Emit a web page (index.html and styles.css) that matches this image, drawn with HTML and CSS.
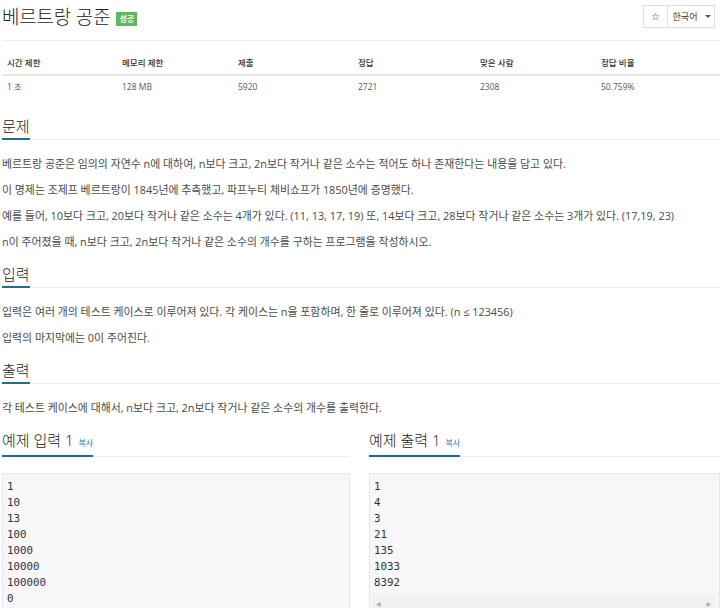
FILE: index.html
```html
<!DOCTYPE html>
<html lang="ko">
<head>
<meta charset="utf-8">
<title>베르트랑 공준</title>
<link rel="stylesheet" href="styles.css">
</head>
<body>
<div class="page">
  <div class="title-row">
    <h1 class="title">베르트랑 공준 <span class="badge">성공</span></h1>
    <div class="btn-group">
      <span class="btn star">☆</span>
      <span class="btn lang">한국어 <span class="caret"></span></span>
    </div>
  </div>

  <table class="info">
    <thead>
      <tr>
        <th class="c1">시간 제한</th>
        <th class="c2">메모리 제한</th>
        <th class="c3">제출</th>
        <th class="c4">정답</th>
        <th class="c5">맞은 사람</th>
        <th>정답 비율</th>
      </tr>
    </thead>
    <tbody>
      <tr>
        <td>1 초</td>
        <td>128 MB</td>
        <td>5920</td>
        <td>2721</td>
        <td>2308</td>
        <td>50.759%</td>
      </tr>
    </tbody>
  </table>

  <section class="sec">
    <h2 class="sec-head"><span>문제</span></h2>
    <p>베르트랑 공준은 임의의 자연수 n에 대하여, n보다 크고, 2n보다 작거나 같은 소수는 적어도 하나 존재한다는 내용을 담고 있다.</p>
    <p>이 명제는 조제프 베르트랑이 1845년에 추측했고, 파프누티 체비쇼프가 1850년에 증명했다.</p>
    <p>예를 들어, 10보다 크고, 20보다 작거나 같은 소수는 4개가 있다. (11, 13, 17, 19) 또, 14보다 크고, 28보다 작거나 같은 소수는 3개가 있다. (17,19, 23)</p>
    <p>n이 주어졌을 때, n보다 크고, 2n보다 작거나 같은 소수의 개수를 구하는 프로그램을 작성하시오.</p>
  </section>

  <section class="sec">
    <h2 class="sec-head"><span>입력</span></h2>
    <p>입력은 여러 개의 테스트 케이스로 이루어져 있다. 각 케이스는 n을 포함하며, 한 줄로 이루어져 있다. (n ≤ 123456)</p>
    <p>입력의 마지막에는 0이 주어진다.</p>
  </section>

  <section class="sec">
    <h2 class="sec-head"><span>출력</span></h2>
    <p>각 테스트 케이스에 대해서, n보다 크고, 2n보다 작거나 같은 소수의 개수를 출력한다.</p>
  </section>

  <div class="samples">
    <div class="sample">
      <h2 class="sec-head"><span>예제 입력 1 <a class="copy">복사</a></span></h2>
      <pre class="code">1
10
13
100
1000
10000
100000
0</pre>
    </div>
    <div class="sample">
      <h2 class="sec-head"><span>예제 출력 1 <a class="copy">복사</a></span></h2>
      <div class="code-wrap">
        <pre class="code out">1
4
3
21
135
1033
8392</pre>
        <div class="hscroll"><span class="arr">&#9664;</span><span class="arr">&#9654;</span></div>
      </div>
    </div>
  </div>
</div>
</body>
</html>
```

FILE: styles.css
```css
* { box-sizing: border-box; }

html, body {
  margin: 0;
  padding: 0;
  background: #fff;
}

body {
  font-family: "Open Sans", "Noto Sans CJK KR", sans-serif;
  color: #444;
  overflow: hidden;
}

.page {
  padding: 0 0 0 2px;
  width: 720px;
}

.title-row {
  display: flex;
  justify-content: space-between;
  align-items: flex-start;
  padding-top: 2px;
  padding-bottom: 8px;
  border-bottom: 1px solid #eee;
}

.title {
  margin: 0;
  font-size: 19px;
  line-height: 30px;
  font-weight: 300;
  color: #222;
  letter-spacing: -0.2px;
  display: flex;
  align-items: center;
}

.badge {
  display: inline-block;
  margin-left: 6px;
  background: #5cb85c;
  color: #fff;
  font-size: 8px;
  font-weight: 700;
  line-height: 14px;
  padding: 0 3px;
  margin-top: 3px;
  letter-spacing: 0;
}

.btn-group {
  display: flex;
  margin-top: 3px;
  margin-right: 5px;
}

.btn {
  display: inline-flex;
  align-items: center;
  justify-content: center;
  height: 23px;
  border: 1px solid #ddd;
  font-size: 9px;
  color: #333;
  background: #fff;
}

.star {
  width: 25px;
  font-family: "DejaVu Sans", sans-serif;
  font-size: 10px;
  color: #222;
}

.lang {
  width: 47px;
  border-left: none;
  padding-left: 2px;
}

.caret {
  display: inline-block;
  width: 0;
  height: 0;
  margin-left: 8px;
  border-top: 3px solid #555;
  border-left: 3px solid transparent;
  border-right: 3px solid transparent;
}

.info {
  width: 718px;
  border-collapse: collapse;
  margin-top: 10px;
  font-size: 8.5px;
  color: #333;
}

.info th, .info td {
  text-align: left;
  padding: 5px 5px;
  line-height: 13px;
}

.info th {
  font-weight: 500;
  border-bottom: 2px solid #e6e6e6;
}

.info td {
  padding-top: 4px;
  padding-bottom: 4px;
  color: #555;
}

.c1 { width: 115px; }
.c2 { width: 116px; }
.c3 { width: 120px; }
.c4 { width: 122px; }
.c5 { width: 121px; }

.sec-head {
  margin: 14px 0 16px;
  font-size: 15px;
  font-weight: 300;
  line-height: 20px;
  color: #222;
  border-bottom: 1px solid #eee;
}

.sec-head span {
  display: inline-block;
  padding-bottom: 2px;
  margin-bottom: -1px;
  border-bottom: 2px solid #1b6f8f;
}

.sec:first-of-type .sec-head {
  margin-top: 19px;
}

.sec p {
  margin: 0 0 10px;
  font-size: 10.9px;
  line-height: 16px;
  color: #4a4a4a;
}

.copy {
  font-size: 8px;
  font-weight: 400;
  color: #337ab7;
  margin-left: 1px;
}

.samples {
  display: grid;
  grid-template-columns: 348px 1fr;
  column-gap: 19px;
  margin-top: 14px;
}

.samples .sec-head {
  margin-top: 0;
}

.code {
  margin: 0;
  background: #f7f7f9;
  border: 1px solid #e6e6ec;
  border-bottom: none;
  padding: 5px 4px 8px;
  font-family: "DejaVu Sans Mono", monospace;
  font-size: 10.8px;
  line-height: 16px;
  color: #333;
  height: 150px;
}

.code-wrap {
  background: #f7f7f9;
  border: 1px solid #e6e6ec;
  border-bottom: none;
  height: 150px;
}

.code.out {
  border: none;
  height: 121px;
}

.hscroll {
  display: flex;
  justify-content: space-between;
  align-items: center;
  height: 16px;
  margin: 0 4px 0 2px;
  background: #f1f1f1;
  padding: 0 4px;
}

.arr {
  font-family: "DejaVu Sans", sans-serif;
  font-size: 6px;
  color: #aaa;
}
```
